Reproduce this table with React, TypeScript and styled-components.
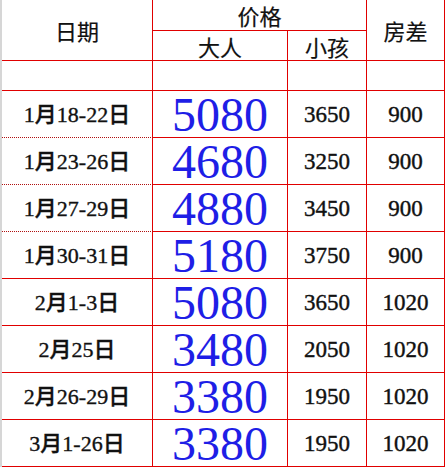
import React from "react";
import styled, { createGlobalStyle } from "styled-components";

const GlobalStyle = createGlobalStyle`
  html, body {
    margin: 0;
    padding: 0;
    background: #ffffff;
  }
`;

const RED = "#e00000";

const Sheet = styled.div`
  display: grid;
  grid-template-columns: 151px 135px 79px 78px;
  grid-template-rows: 31px 30px 30px repeat(8, 47px);
  width: 443px;
  border-left: 2px solid #d6d6d6;
  margin-right: 1px;
  font-family: "Liberation Serif", "Noto Sans CJK SC", serif;
  color: #111;
`;

const Cell = styled.div<{ $dotted?: boolean; $col?: string; $row?: string }>`
  box-sizing: border-box;
  display: flex;
  align-items: center;
  justify-content: center;
  border-right: 1px solid ${RED};
  border-bottom: 1px ${(p) => (p.$dotted ? "dotted #b01010" : `solid ${RED}`)};
  grid-column: ${(p) => p.$col || "auto"};
  grid-row: ${(p) => p.$row || "auto"};
  white-space: nowrap;
`;

const HeadCell = styled(Cell)<{ $low?: boolean }>`
  font-family: "Noto Sans CJK SC", sans-serif;
  font-size: 22px;
  line-height: 1;
  -webkit-text-stroke: 0.2px #111;
  align-items: ${(p) => (p.$low ? "flex-end" : "center")};
  padding-bottom: ${(p) => (p.$low ? "3px" : "0")};
`;

const DateCell = styled(Cell)`
  font-size: 22px;
  line-height: 24px;
  font-weight: 500;
  -webkit-text-stroke: 0.35px #111;
  padding-top: 2px;
`;

const AdultCell = styled(Cell)`
  font-size: 48px;
  line-height: 44px;
  color: #1e1ee6;
  padding-top: 2px;
`;

const PriceCell = styled(Cell)`
  font-size: 23px;
  line-height: 24px;
  -webkit-text-stroke: 0.4px #111;
  padding-top: 2px;
`;

const rows = [
  { date: "1月18-22日", adult: "5080", child: "3650", diff: "900", dotted: true },
  { date: "1月23-26日", adult: "4680", child: "3250", diff: "900", dotted: true },
  { date: "1月27-29日", adult: "4880", child: "3450", diff: "900", dotted: true },
  { date: "1月30-31日", adult: "5180", child: "3750", diff: "900" },
  { date: "2月1-3日", adult: "5080", child: "3650", diff: "1020" },
  { date: "2月25日", adult: "3480", child: "2050", diff: "1020" },
  { date: "2月26-29日", adult: "3380", child: "1950", diff: "1020" },
  { date: "3月1-26日", adult: "3380", child: "1950", diff: "1020" },
];

export default function App() {
  return (
    <>
      <GlobalStyle />
      <Sheet>
        <HeadCell $col="1" $row="1 / span 2">日期</HeadCell>
        <HeadCell $col="2 / span 2" $row="1">价格</HeadCell>
        <HeadCell $col="4" $row="1 / span 2">房差</HeadCell>
        <HeadCell $col="2" $row="2" $low>大人</HeadCell>
        <HeadCell $col="3" $row="2" $low>小孩</HeadCell>

        <Cell />
        <Cell />
        <Cell />
        <Cell />

        {rows.map((r) => (
          <React.Fragment key={r.date}>
            <DateCell $dotted={r.dotted}>{r.date}</DateCell>
            <AdultCell>{r.adult}</AdultCell>
            <PriceCell>{r.child}</PriceCell>
            <PriceCell>{r.diff}</PriceCell>
          </React.Fragment>
        ))}
      </Sheet>
    </>
  );
}
